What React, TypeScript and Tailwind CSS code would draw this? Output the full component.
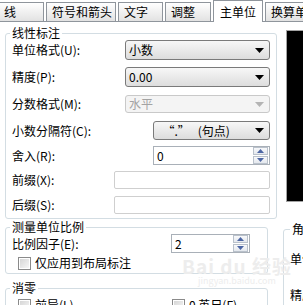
import React from "react";

const font = { fontFamily: '"Noto Sans CJK SC", "Liberation Sans", sans-serif' };

const Arrow = ({ disabled }: { disabled?: boolean }) => (
  <svg width="9" height="5" viewBox="0 0 9 5" className="shrink-0">
    <path d="M0 0H9L4.5 5Z" fill={disabled ? "#b4b4b4" : "#000"} />
  </svg>
);

const Select = ({ value, className, disabled }: { value: string; className: string; disabled?: boolean }) => (
  <div
    className={
      disabled
        ? `flex items-center justify-between rounded-[3px] border border-[#c9c9c9] bg-[#f4f4f4] pl-[3px] pr-[5px] text-[#a3a3a3] ${className}`
        : `flex items-center justify-between rounded-[3px] border border-[#7a7a7a] bg-gradient-to-b from-[#f7f7f7] to-[#dddddd] pl-[3px] pr-[5px] ${className}`
    }
  >
    <span className="whitespace-pre leading-none">{value}</span>
    <Arrow disabled={disabled} />
  </div>
);

const SpinButton = ({ up }: { up?: boolean }) => (
  <div className="flex h-[8px] w-[15px] items-center justify-center border border-[#b9c1cb] bg-gradient-to-b from-[#f8f9fb] to-[#e4e8ee]">
    <svg width="7" height="4" viewBox="0 0 7 4">
      <path d={up ? "M0 4H7L3.5 0Z" : "M0 0H7L3.5 4Z"} fill="#4c66a4" />
    </svg>
  </div>
);

const Spin = ({ value, className }: { value: string; className: string }) => (
  <div className={`flex items-center justify-between border border-[#a9b0b8] bg-white pl-[3px] pr-[1px] ${className}`}>
    <span className="leading-none">{value}</span>
    <div className="flex flex-col gap-[1px]">
      <SpinButton up />
      <SpinButton />
    </div>
  </div>
);

const Input = ({ className }: { className: string }) => (
  <div className={`rounded-[2px] border border-[#cfcfcf] bg-white ${className}`} />
);

const Check = () => (
  <div className="h-[13px] w-[13px] shrink-0 border border-[#8a8a8a] bg-white p-[1px]">
    <div className="h-full w-full bg-gradient-to-br from-[#d6d6d6] to-[#f6f6f6]" />
  </div>
);

const Tab = ({ label, width, active }: { label: string; width: string; active?: boolean }) =>
  active ? (
    <div className={`relative z-10 -mb-[1px] flex h-[22px] shrink-0 justify-center border border-b-0 border-[#8f959c] bg-white pt-[2px] ${width}`}>
      {label}
    </div>
  ) : (
    <div className={`flex h-[19px] shrink-0 items-center border border-b-0 border-[#8f959c] bg-gradient-to-b from-white to-[#e2e2e2] pl-[5px] ${width}`}>
      {label}
    </div>
  );

export default function App() {
  return (
    <div className="relative h-[305px] w-[303px] overflow-hidden bg-white text-[12px] text-black" style={font}>
      {/* tabs */}
      <div className="flex h-[22px] items-end gap-[2px] border-b border-[#8f959c]">
        <Tab label="线" width="w-[46px] -ml-[2px]" />
        <Tab label="符号和箭头" width="w-[70px]" />
        <Tab label="文字" width="w-[45px]" />
        <Tab label="调整" width="w-[46px]" />
        <Tab label="主单位" width="w-[50px]" active />
        <Tab label="换算单位" width="w-[60px]" />
      </div>

      <div className="flex">
        {/* left column */}
        <div className="w-[280px] shrink-0 pl-[5px]">
          <fieldset className="mt-[4px] w-[272px] rounded-[3px] border border-[#d3dde3] pb-[4px] pl-[6px] pr-[6px]">
            <legend className="-ml-[2px] px-[2px] leading-[14px]">线性标注</legend>
            <div className="flex h-[20px] items-center justify-between">
              <span>单位格式(U):</span>
              <Select value="小数" className="h-[20px] w-[145px]" />
            </div>
            <div className="mt-[7px] flex h-[20px] items-center justify-between">
              <span>精度(P):</span>
              <Select value="0.00" className="h-[20px] w-[145px]" />
            </div>
            <div className="mt-[8px] flex h-[18px] items-center justify-between">
              <span>分数格式(M):</span>
              <Select value="水平" className="h-[18px] w-[145px]" disabled />
            </div>
            <div className="mt-[8px] flex h-[19px] items-center justify-between">
              <span>小数分隔符(C):</span>
              <Select value={"  “.”   (句点)"} className="h-[19px] w-[117px]" />
            </div>
            <div className="mt-[6px] flex h-[19px] items-center justify-between">
              <span>舍入(R):</span>
              <Spin value="0" className="h-[19px] w-[117px]" />
            </div>
            <div className="mt-[6px] flex h-[18px] items-center justify-between">
              <span>前缀(X):</span>
              <Input className="h-[18px] w-[156px]" />
            </div>
            <div className="mt-[7px] flex h-[18px] items-center justify-between">
              <span>后缀(S):</span>
              <Input className="h-[18px] w-[156px]" />
            </div>
          </fieldset>

          <fieldset className="mt-[1px] w-[263px] rounded-[3px] border border-[#d3dde3] pb-[3px] pl-[6px] pr-[17px]">
            <legend className="-ml-[2px] px-[2px] leading-[14px]">测量单位比例</legend>
            <div className="flex h-[19px] items-center justify-between">
              <span>比例因子(E):</span>
              <Spin value="2" className="h-[19px] w-[79px]" />
            </div>
            <div className="mt-[3px] flex h-[14px] items-center gap-[4px] pl-[6px]">
              <Check />
              <span>仅应用到布局标注</span>
            </div>
          </fieldset>

          <fieldset className="mt-[7px] h-[40px] w-[263px] rounded-[3px] border border-[#d3dde3] pl-[6px]">
            <legend className="-ml-[2px] px-[2px] leading-[14px]">消零</legend>
            <div className="mt-[1px] flex items-center">
              <div className="flex w-[160px] items-center gap-[4px] pl-[6px]">
                <Check />
                <span>前导(L)</span>
              </div>
              <div className="flex items-center gap-[4px]">
                <Check />
                <span>0 英尺(F)</span>
              </div>
            </div>
          </fieldset>
        </div>

        {/* right column */}
        <div className="w-[120px] shrink-0">
          <div className="ml-[6px] mt-[8px] h-[172px] border border-[#a3a3a3] bg-black" />
          <fieldset className="ml-[3px] mt-[20px] h-[90px] rounded-[3px] border border-[#d3dde3] pl-[4px]">
            <legend className="ml-[2px] px-[2px] leading-[14px]">角度标注</legend>
            <div className="mt-[14px] pl-[2px]">单位格式(A):</div>
            <div className="mt-[18px] pl-[2px]">精度(O):</div>
          </fieldset>
        </div>
      </div>

      {/* watermark */}
      <div className="pointer-events-none absolute left-[182px] top-[256px] flex flex-col items-center text-[#ededed]">
        <span className="text-[19px] font-bold leading-[20px] tracking-[1px]">Bai du 经验</span>
        <span className="text-[9px] leading-[10px]">jingyan.baidu.com</span>
      </div>
    </div>
  );
}
